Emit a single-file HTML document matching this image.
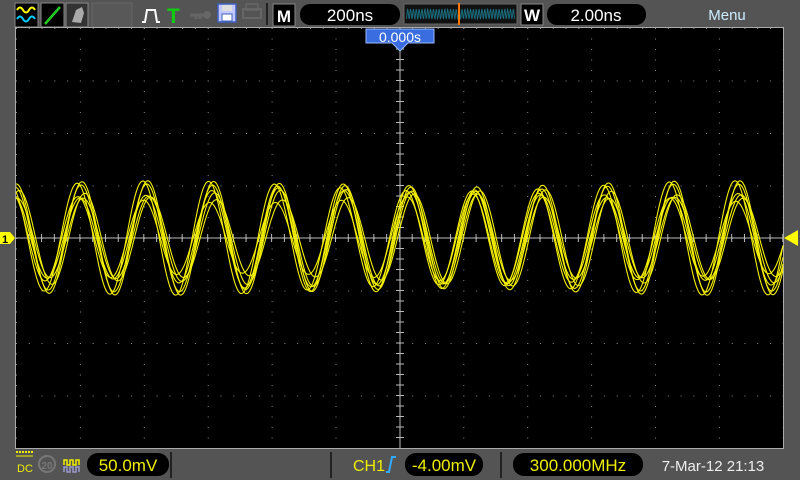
<!DOCTYPE html>
<html><head><meta charset="utf-8"><style>
html,body{margin:0;padding:0;background:#545454;width:800px;height:480px;overflow:hidden}
svg{display:block}
text{font-family:"Liberation Sans","DejaVu Sans",sans-serif}
</style></head><body>
<svg id="s" width="800" height="480" viewBox="0 0 800 480" xmlns="http://www.w3.org/2000/svg">
<defs>
<pattern id="ph" x="16" y="28" width="12.78" height="52.5" patternUnits="userSpaceOnUse"><rect x="0" y="0" width="1" height="1" fill="#8a8a8a"/></pattern>
<pattern id="pv" x="16" y="28" width="63.9" height="10.5" patternUnits="userSpaceOnUse"><rect x="0" y="0" width="1" height="1" fill="#8a8a8a"/></pattern>
</defs>
<rect width="800" height="480" fill="#545454"/>
<rect x="15" y="3" width="23" height="24" fill="#000" stroke="#888"/>
<path d="M17,10 q3,-5 6,0 t6,0 t6,0" stroke="#ff0" stroke-width="2" fill="none"/>
<path d="M17,19 q3,-5 6,0 t6,0 t6,0" stroke="#0cf" stroke-width="2" fill="none"/>
<rect x="41" y="3" width="23" height="24" fill="#000" stroke="#888"/>
<line x1="45" y1="24" x2="60" y2="7" stroke="#2c2" stroke-width="2.5"/>
<rect x="66" y="3" width="22" height="24" fill="#333" stroke="#888"/>
<path d="M72,22 l4,-12 l6,-3 l2,6 l-3,10 z" fill="#aaa"/>
<rect x="92" y="3" width="40" height="24" fill="#585858" stroke="#666"/>
<path d="M142,22 l3,0 l2,-12 l8,0 l2,12 l3,0" stroke="#fff" stroke-width="2" fill="none"/>
<text x="167" y="23" fill="#1c1" font-size="21" font-weight="bold">T</text>
<path d="M190,15 h14 M196,15 v4 M200,15 v4" stroke="#666" stroke-width="3"/><circle cx="207" cy="15" r="4" fill="#666"/>
<rect x="218" y="4" width="18" height="18" fill="#c0c8ff" stroke="#4060c0" stroke-width="1.5"/><rect x="222" y="14" width="10" height="7" fill="#fff" stroke="#4060c0"/><rect x="222" y="5" width="10" height="6" fill="#ddd"/>
<rect x="243" y="9" width="18" height="9" fill="none" stroke="#666" stroke-width="2"/><rect x="246" y="4" width="12" height="6" fill="none" stroke="#666" stroke-width="1.5"/>
<line x1="267" y1="3" x2="267" y2="25" stroke="#222" stroke-width="2"/>
<rect x="273" y="4" width="22" height="22" fill="#000" stroke="#888"/>
<text x="284" y="22" fill="#fff" font-size="17" font-weight="bold" text-anchor="middle">M</text>
<rect x="300" y="4" width="100" height="21" rx="10" fill="#000"/>
<text x="350" y="21" fill="#fff" font-size="17" text-anchor="middle">200ns</text>
<rect x="404" y="4" width="113" height="20" fill="#111" stroke="#666"/>
<path id="mini" d="" stroke="#1a6a7a" stroke-width="1" fill="none"/>
<line x1="459" y1="3" x2="459" y2="25" stroke="#f70" stroke-width="2"/>
<rect x="521" y="4" width="22" height="21" fill="#000" stroke="#888"/>
<text x="532" y="21" fill="#fff" font-size="17" font-weight="bold" text-anchor="middle">W</text>
<rect x="547" y="4" width="99" height="21" rx="10" fill="#000"/>
<text x="596" y="21" fill="#fff" font-size="17" text-anchor="middle">2.00ns</text>
<text x="727" y="20" fill="#cef" font-size="15" text-anchor="middle">Menu</text>
<rect x="16" y="28" width="767" height="420" fill="#000"/>
<rect x="16" y="28" width="767" height="421" fill="url(#ph)"/>
<rect x="16" y="28" width="767" height="420" fill="url(#pv)"/>
<line x1="16" y1="238" x2="783" y2="238" stroke="#bbb" stroke-width="1"/>
<line x1="400" y1="28" x2="400" y2="448" stroke="#bbb" stroke-width="1"/>
<g id="ticks" stroke="#bbb" stroke-width="1"></g>
<rect x="15.5" y="27.5" width="768" height="421" fill="none" stroke="#aaa"/>
<g id="waves" fill="none" stroke="#f4f000" stroke-width="1.1"></g>
<path d="M366,29 h68 v14 h-26 l-8,8 l-8,-8 h-26 z" fill="#3a6ee0" stroke="#9bf" stroke-width="1"/>
<text x="400" y="42" fill="#fff" font-size="14" text-anchor="middle">0.000s</text>
<path d="M0,232 h10 l5,6 l-5,6 h-10 z" fill="#ff0"/>
<text x="5" y="243" font-size="11" font-weight="bold" fill="#000" text-anchor="middle">1</text>
<path d="M784,238 l14,-8 v16 z" fill="#ff0"/>
<line x1="16" y1="452" x2="33" y2="452" stroke="#ee0" stroke-width="2" stroke-dasharray="2,1"/>
<line x1="16" y1="456" x2="33" y2="456" stroke="#ee0" stroke-width="1"/>
<text x="17" y="472" fill="#ee0" font-size="11">DC</text>
<circle cx="47" cy="464" r="8" fill="none" stroke="#777" stroke-width="2"/>
<text x="47" y="469" fill="#777" font-size="10" text-anchor="middle" font-weight="bold">20</text>
<path d="M64,465 v-5 h3 v5 h3 v-5 h3 v5 h3 v-5 h3 v5" stroke="#ee0" fill="none" stroke-width="1.5"/>
<path d="M64,472 v-5 h3 v5 h3 v-5 h3 v5 h3 v-5 h3 v5" stroke="#99c" fill="none" stroke-width="1.5"/>
<rect x="87" y="453" width="82" height="23" rx="11" fill="#000"/>
<text x="128" y="471" fill="#ee0" font-size="17" text-anchor="middle">50.0mV</text>
<line x1="171" y1="452" x2="171" y2="478" stroke="#111" stroke-width="1.5"/>
<line x1="331" y1="452" x2="331" y2="478" stroke="#111" stroke-width="1.5"/>
<text x="353" y="471" fill="#ee0" font-size="16">CH1</text>
<path d="M386,472 h3 l3,-15 h4" stroke="#3af" stroke-width="2" fill="none"/>
<rect x="405" y="453" width="78" height="23" rx="11" fill="#000"/>
<text x="444" y="471" fill="#ee0" font-size="17" text-anchor="middle">-4.00mV</text>
<line x1="501" y1="452" x2="501" y2="478" stroke="#111" stroke-width="1.5"/>
<rect x="513" y="453" width="130" height="23" rx="11" fill="#000"/>
<text x="578" y="471" fill="#ee0" font-size="17" text-anchor="middle">300.000MHz</text>
<text x="713" y="471" fill="#eee" font-size="15" text-anchor="middle">7-Mar-12 21:13</text>
</svg>
<script>
var NS="http://www.w3.org/2000/svg";
var t=document.getElementById("ticks");
for(var x=16+12.78;x<783;x+=12.78){var l=document.createElementNS(NS,"line");l.setAttribute("x1",x);l.setAttribute("x2",x);l.setAttribute("y1",234);l.setAttribute("y2",242);t.appendChild(l);}
for(var y=28+10.5;y<448;y+=10.5){var l=document.createElementNS(NS,"line");l.setAttribute("x1",396);l.setAttribute("x2",404);l.setAttribute("y1",y);l.setAttribute("y2",y);t.appendChild(l);}
var w=document.getElementById("waves");
var params=[[50,0,0.08],[44,2,-0.1],[40,-3,0.12],[54,1,-0.06],[47,-1,0.15],[43,4,-0.12],[52,-4,0.1]];
params.forEach(function(p,i){
 var d="";
 for(var x=16;x<=783;x+=1){
  var a=p[0]*(1+p[2]*Math.sin(x/90+i));
  var y=238-a*Math.cos(2*Math.PI*(x-81-p[1])/65.8);
  d+=(x==16?"M":"L")+x+","+y.toFixed(1);
 }
 var e=document.createElementNS(NS,"path");e.setAttribute("d",d);w.appendChild(e);
});
var m="";for(var x=406;x<=515;x+=0.5){m+=(x==406?"M":"L")+x+","+(14+5*Math.sin(x*2.2)).toFixed(1);}
document.getElementById("mini").setAttribute("d",m);
</script>
</body></html>
